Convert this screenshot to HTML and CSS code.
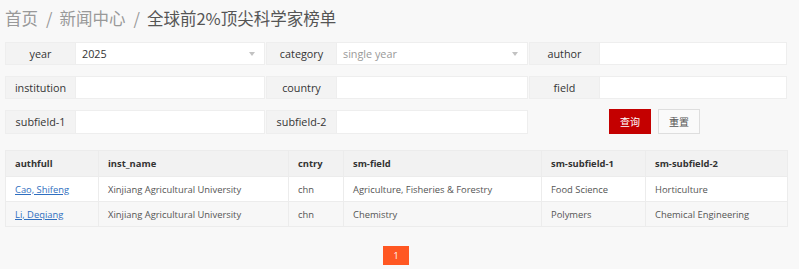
FILE: index.html
```html
<!DOCTYPE html>
<html lang="zh-CN">
<head>
    <meta charset="UTF-8">
    <meta name="viewport" content="width=device-width, initial-scale=1.0">
    <title>全球前2%顶尖科学家榜单</title>
    <link rel="stylesheet" href="styles.css">
</head>

<body>
    <div class="page">
        <!-- 面包屑 -->
        <div class="crumb">
            <a href="#">首页</a><span class="sep">/</span><a href="#">新闻中心</a><span class="sep">/</span><cite>全球前2%顶尖科学家榜单</cite>
        </div>

        <!-- 查询表单 -->
        <form class="search">
            <div class="group">
                <label>year</label>
                <div class="field select">2025<i class="arrow"></i></div>
            </div>
            <div class="group">
                <label>category</label>
                <div class="field select muted">single year<i class="arrow"></i></div>
            </div>
            <div class="group">
                <label>author</label>
                <div class="field"></div>
            </div>

            <div class="group">
                <label>institution</label>
                <div class="field"></div>
            </div>
            <div class="group">
                <label>country</label>
                <div class="field"></div>
            </div>
            <div class="group">
                <label>field</label>
                <div class="field"></div>
            </div>

            <div class="group">
                <label>subfield-1</label>
                <div class="field"></div>
            </div>
            <div class="group">
                <label>subfield-2</label>
                <div class="field"></div>
            </div>
            <div class="group btns">
                <button type="button" class="btn btn-red">查询</button>
                <button type="button" class="btn btn-plain">重置</button>
            </div>
        </form>

        <!-- 结果 -->
        <table class="list">
            <colgroup>
                <col style="width: 93px">
                <col style="width: 190px">
                <col style="width: 55px">
                <col style="width: 198px">
                <col style="width: 104px">
                <col style="width: 142px">
            </colgroup>
            <thead>
                <tr>
                    <th>authfull</th>
                    <th>inst_name</th>
                    <th>cntry</th>
                    <th>sm-field</th>
                    <th>sm-subfield-1</th>
                    <th>sm-subfield-2</th>
                </tr>
            </thead>
            <tbody>
                <tr>
                    <td><a href="#">Cao, Shifeng</a></td>
                    <td>Xinjiang Agricultural University</td>
                    <td>chn</td>
                    <td>Agriculture, Fisheries &amp; Forestry</td>
                    <td>Food Science</td>
                    <td>Horticulture</td>
                </tr>
                <tr>
                    <td><a href="#">Li, Deqiang</a></td>
                    <td>Xinjiang Agricultural University</td>
                    <td>chn</td>
                    <td>Chemistry</td>
                    <td>Polymers</td>
                    <td>Chemical Engineering</td>
                </tr>
            </tbody>
        </table>

        <div class="pager">
            <span class="cur">1</span>
        </div>
    </div>
</body>

</html>
```

FILE: styles.css
```css
* {
    margin: 0;
    padding: 0;
    box-sizing: border-box;
}

body {
    background-color: #f8f8f8;
    font-family: "Open Sans", "Noto Sans CJK SC", sans-serif;
    color: #333;
}

.page {
    width: 792px;
    padding: 0 5px;
}

/* 面包屑 */
.crumb {
    padding-top: 6px;
    height: 42px;
    line-height: 24px;
    font-size: 16.5px;
    font-family: "Noto Sans CJK SC", sans-serif;
}

.crumb a {
    color: #999;
    text-decoration: none;
}

.crumb .sep {
    color: #999;
    margin: 0 7px 0 8px;
}

.crumb cite {
    font-style: normal;
    color: #555;
}

/* 表单 */
.search {
    display: grid;
    grid-template-columns: 260px 262px 258px;
    row-gap: 11px;
    column-gap: 1px;
    margin-bottom: 16px;
}

.group {
    display: flex;
    height: 23px;
}

.group:nth-child(n+7) {
    height: 24px;
}

.group label {
    width: 70px;
    flex: none;
    background-color: #f3f3f3;
    border: 1px solid #eeeeee;
    border-right: none;
    text-align: center;
    font-size: 10.8px;
    line-height: 21px;
    color: #333;
}

.field {
    flex: 1;
    background-color: #fff;
    border: 1px solid #eeeeee;
    font-size: 10.8px;
    line-height: 21px;
    padding-left: 6px;
    position: relative;
}

.field.muted {
    color: #999;
}

.arrow {
    position: absolute;
    right: 9px;
    top: 9px;
    width: 0;
    height: 0;
    border-left: 3px solid transparent;
    border-right: 3px solid transparent;
    border-top: 4px solid #c2c2c2;
}

.btns {
    padding-left: 80px;
    gap: 7px;
    height: 25px;
    margin-top: -1px;
}

.btn {
    width: 42px;
    height: 25px;
    font-family: "Noto Sans CJK SC", sans-serif;
    font-size: 10px;
    cursor: pointer;
}

.btn-red {
    background-color: #c40000;
    border: 1px solid #c40000;
    color: #fff;
}

.btn-plain {
    background-color: #fafafa;
    border: 1px solid #dedede;
    color: #555;
}

/* 表格 */
.list {
    width: 782px;
    border-collapse: collapse;
    table-layout: fixed;
    font-size: 9.4px;
    color: #555;
}

.list th,
.list td {
    border: 1px solid #ececec;
    text-align: left;
    padding: 0 9px;
}

.list th {
    height: 26px;
    background-color: #f2f2f2;
    color: #333;
    font-weight: bold;
}

.list td {
    height: 25px;
}

.list tbody tr:nth-child(1) {
    background-color: #fff;
}

.list tbody tr:nth-child(2) {
    background-color: #f7f7f7;
}

.list td a {
    color: #2f6fc0;
    text-decoration: underline;
}

/* 分页 */
.pager {
    width: 782px;
    padding-top: 19px;
    display: flex;
    justify-content: center;
}

.pager .cur {
    width: 26px;
    height: 19px;
    line-height: 19px;
    text-align: center;
    background-color: #ff5722;
    color: #fff;
    font-size: 9px;
}
```
